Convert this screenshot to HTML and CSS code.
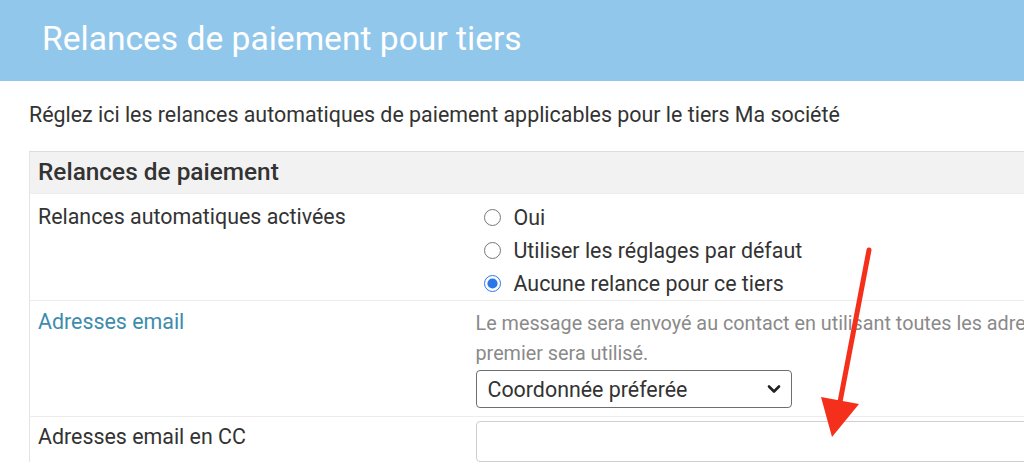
FILE: index.html
```html
<!DOCTYPE html>
<html lang="fr">
<head>
    <meta charset="UTF-8">
    <title>Relances de paiement pour tiers</title>
    <link rel="stylesheet" href="styles.css">
</head>
<body>
    <div class="page-header">
        <h1>Relances de paiement pour tiers</h1>
    </div>

    <div class="content">
        <p class="intro">Réglez ici les relances automatiques de paiement applicables pour le tiers Ma société</p>

        <table class="settings">
            <colgroup>
                <col class="col-label">
                <col>
            </colgroup>
            <tr class="section-row">
                <th colspan="2">Relances de paiement</th>
            </tr>
            <tr>
                <td class="label">Relances automatiques activées</td>
                <td class="value">
                    <label class="radio"><input type="radio" name="relance"> Oui</label>
                    <label class="radio"><input type="radio" name="relance"> Utiliser les réglages par défaut</label>
                    <label class="radio"><input type="radio" name="relance" checked> Aucune relance pour ce tiers</label>
                </td>
            </tr>
            <tr>
                <td class="label label-link"><a href="#" class="link">Adresses email</a></td>
                <td class="value">
                    <p class="help">Le message sera envoyé au contact en utilisant toutes les adresses email renseignées. Si aucune n'est cochée, le<br>premier sera utilisé.</p>
                    <select class="select">
                        <option>Coordonnée préferée</option>
                    </select>
                </td>
            </tr>
            <tr>
                <td class="label label-short">Adresses email en CC</td>
                <td class="value value-input">
                    <input type="text" class="text-input">
                </td>
            </tr>
        </table>
    </div>

    <!-- annotation arrow drawn over the screenshot -->
    <svg class="arrow" width="1024" height="464" viewBox="0 0 1024 464">
        <line x1="869" y1="250" x2="840" y2="402" stroke="#f4301c" stroke-width="5" stroke-linecap="round"/>
        <polygon points="821,397 859,404 832,437" fill="#f4301c"/>
    </svg>
</body>
</html>
```

FILE: styles.css
```css
* {
    margin: 0;
    padding: 0;
    box-sizing: border-box;
}

html, body {
    width: 1024px;
    height: 464px;
    overflow: hidden;
}

body {
    font-family: Roboto, "Noto Sans", sans-serif;
    color: #333;
    background: white;
    position: relative;
}

.page-header {
    background: #92c7ec;
    height: 81px;
    padding-left: 42px;
    display: flex;
    align-items: center;
}

.page-header h1 {
    color: white;
    font-size: 33.6px;
    font-weight: 400;
    margin-top: -4px;
}

.content {
    padding-left: 29px;
}

.intro {
    font-size: 21.4px;
    line-height: 26px;
    margin-top: 21px;
    margin-bottom: 23px;
    white-space: nowrap;
}

.settings {
    border-collapse: collapse;
    table-layout: fixed;
    width: 1200px;
    border-top: 1px solid #dcdcdc;
    border-left: 1px solid #e4e4e4;
}

.col-label {
    width: 446px;
}

.section-row th {
    background: #f2f2f2;
    text-align: left;
    font-size: 24.4px;
    font-weight: 500;
    line-height: 28px;
    padding: 6px 8px 7px 8px;
    height: 41px;
}

.settings td {
    vertical-align: top;
    border-top: 1px solid #ececec;
    font-size: 21.4px;
    line-height: 26px;
}

.label {
    padding: 10px 8px;
    white-space: nowrap;
}

.label-link {
    padding-top: 8px;
}

.label-short {
    padding-top: 7px;
}

.value {
    padding: 7px 0 0 0;
}

.radio {
    display: flex;
    align-items: center;
    height: 33px;
    font-size: 21.4px;
    white-space: nowrap;
}

.radio input {
    width: 17px;
    height: 17px;
    margin: 0 13px 0 8px;
    accent-color: #2a77e8;
}

.link {
    color: #3e8cad;
    text-decoration: none;
}

.help {
    color: #8a8a8a;
    font-size: 19.8px;
    line-height: 30px;
    white-space: nowrap;
    margin-top: 1px;
}

.select {
    appearance: none;
    font-family: Roboto, "Noto Sans", sans-serif;
    font-size: 21.4px;
    color: #333;
    width: 316px;
    height: 38px;
    margin: 1px 0 8px 0;
    padding: 0 36px 0 11px;
    border: 1px solid #6f6f6f;
    border-radius: 4px;
    background: white url("data:image/svg+xml,%3Csvg xmlns='http://www.w3.org/2000/svg' width='14' height='10' viewBox='0 0 14 10'%3E%3Cpath d='M2 2.5l5 5 5-5' fill='none' stroke='%23222' stroke-width='2.6' stroke-linecap='round' stroke-linejoin='round'/%3E%3C/svg%3E") no-repeat right 10px center;
}

.value-input {
    padding-top: 4px;
}

.text-input {
    width: 700px;
    height: 41px;
    border: 1px solid #cfcfcf;
    border-radius: 4px;
}

.arrow {
    position: absolute;
    top: 0;
    left: 0;
    pointer-events: none;
}
```
